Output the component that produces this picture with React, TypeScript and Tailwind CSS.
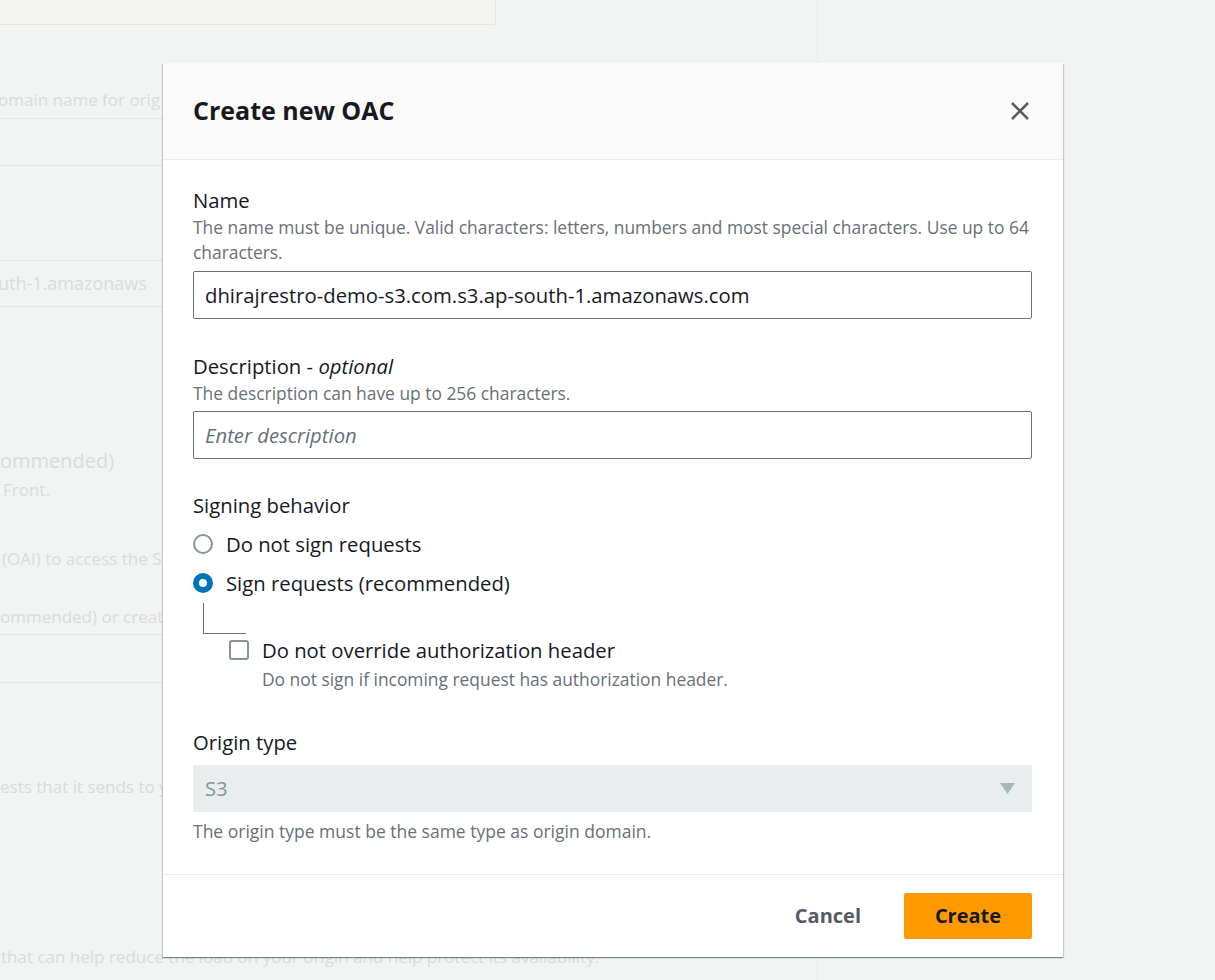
import React from "react";

// faint page behind the modal (only the part left of the modal shows)
function BackgroundPage() {
  return (
    <div className="flex h-full w-full">
      <div className="w-[818px] shrink-0 border-r border-[#e9ebeb] text-[#d9dcdc]">
        <div className="h-[25px] w-[496px] border-b border-r border-[#e6e6e1] bg-[#f4f4f2] rounded-br-[3px]" />
        <div className="w-[163px] overflow-hidden">
          <div className="mt-[63px] -ml-[2px] text-[17px] leading-[24px] whitespace-nowrap">omain name for orig</div>
          <div className="mt-[6px] h-[48px] border-y border-[#e4e7e7]" />
          <div className="mt-[94px] h-[47px] border-y border-[#e4e7e7] flex items-center -ml-[2px] text-[18px] whitespace-nowrap">
            uth-1.amazonaws
          </div>
          <div className="mt-[141px] text-[20px] leading-[26px] whitespace-nowrap">ommended)</div>
          <div className="mt-[4px] ml-[3px] text-[17px] leading-[24px] whitespace-nowrap">Front.</div>
          <div className="mt-[44px] ml-[2px] text-[17px] leading-[26px] whitespace-nowrap">(OAI) to access the S</div>
          <div className="mt-[33px] text-[17px] leading-[24px] whitespace-nowrap">ommended) or creat</div>
          <div className="mt-[5px] h-[49px] border-y border-[#efe3e1]" />
          <div className="mt-[92px] text-[17px] leading-[24px] whitespace-nowrap">ests that it sends to y</div>
        </div>
        <div className="mt-[146px] ml-[1px] text-[17px] leading-[24px] whitespace-nowrap">
          that can help reduce the load on your origin and help protect its availability.
        </div>
      </div>
      <div className="flex-1" />
    </div>
  );
}

function Field({ label, optional, desc, children }: { label: string; optional?: boolean; desc?: React.ReactNode; children?: React.ReactNode }) {
  return (
    <div>
      <div className="text-[20.3px] leading-[26px] text-[#16191f]">
        {label}
        {optional && (
          <>
            {" - "}
            <i>optional</i>
          </>
        )}
      </div>
      {desc && <div className="mt-[2px] text-[17.4px] leading-[25px] text-[#687078]">{desc}</div>}
      {children}
    </div>
  );
}

export default function App() {
  return (
    <div className="relative w-[1215px] h-[980px] overflow-hidden bg-[#f2f3f3] font-['Open_Sans',sans-serif]">
      <BackgroundPage />

      {/* modal */}
      <div className="absolute left-[163px] top-[63px] w-[900px] h-[894px] bg-white flex flex-col shadow-[0_1px_1px_0_rgba(0,28,36,0.3),1px_1px_1px_0_rgba(0,28,36,0.15),-1px_1px_1px_0_rgba(0,28,36,0.15)]">
        <div className="h-[97px] shrink-0 bg-[#fafafa] border-b border-[#eaeded] flex items-center justify-between pl-[30px] pr-[33px]">
          <h2 className="text-[25px] font-bold text-[#16191f] leading-[32px] -mt-[3px]">Create new OAC</h2>
          <button className="w-[20px] h-[20px] text-[#545b64]">
            <svg viewBox="0 0 20 20" width="20" height="20" fill="none" stroke="currentColor" strokeWidth="2.5">
              <path d="M2 2 L18 18 M18 2 L2 18" />
            </svg>
          </button>
        </div>

        <div className="flex-1 pl-[30px] pr-[31px] pt-[27px]">
          <Field
            label="Name"
            desc="The name must be unique. Valid characters: letters, numbers and most special characters. Use up to 64 characters."
          >
            <div className="mt-[6px] h-[48px] border border-[#687078] rounded-[2px] px-[11px] flex items-center text-[20.3px] text-[#16191f]">
              dhirajrestro-demo-s3.com.s3.ap-south-1.amazonaws.com
            </div>
          </Field>

          <div className="mt-[34px]">
            <Field label="Description" optional desc="The description can have up to 256 characters.">
              <div className="mt-[5px] h-[48px] border border-[#687078] rounded-[2px] px-[11px] flex items-center text-[20.3px] italic text-[#687078]">
                Enter description
              </div>
            </Field>
          </div>

          <div className="mt-[33px]">
            <Field label="Signing behavior" />
            <div className="mt-[13px] flex items-center h-[26px]">
              <span className="w-[20px] h-[20px] rounded-full border-2 border-[#879596] bg-white" />
              <span className="ml-[13px] text-[20.3px] text-[#16191f]">Do not sign requests</span>
            </div>
            <div className="mt-[13px] flex items-center h-[26px]">
              <span className="w-[20px] h-[20px] rounded-full bg-[#0073bb] flex items-center justify-center">
                <span className="w-[8px] h-[8px] rounded-full bg-white" />
              </span>
              <span className="ml-[13px] text-[20.3px] text-[#16191f]">Sign requests (recommended)</span>
            </div>
            <div className="ml-[10px] mt-[7px] w-[43px] h-[31px] border-l border-b border-[#687078]" />
            <div className="ml-[36px] mt-[3px]">
              <div className="flex items-center h-[26px]">
                <span className="w-[20px] h-[20px] rounded-[3px] border-2 border-[#879596] bg-white" />
                <span className="ml-[13px] text-[20.3px] text-[#16191f]">Do not override authorization header</span>
              </div>
              <div className="ml-[33px] mt-[4px] text-[17.4px] leading-[25px] text-[#687078]">
                Do not sign if incoming request has authorization header.
              </div>
            </div>
          </div>

          <div className="mt-[37px]">
            <Field label="Origin type" />
            <div className="mt-[10px] h-[47px] bg-[#eaeded] rounded-[2px] pl-[12px] pr-[17px] flex items-center justify-between">
              <span className="text-[20.3px] text-[#879596]">S3</span>
              <svg width="15" height="11" viewBox="0 0 15 11">
                <path d="M0 0 H15 L7.5 11 Z" fill="#aab7b8" />
              </svg>
            </div>
            <div className="mt-[7px] text-[17.5px] leading-[25px] text-[#687078]">
              The origin type must be the same type as origin domain.
            </div>
          </div>
        </div>

        <div className="h-[83px] shrink-0 border-t border-[#eaeded] flex items-center justify-end gap-[23px] pr-[31px]">
          <button className="px-[20px] h-[46px] text-[20px] font-bold text-[#545b64]">Cancel</button>
          <button className="w-[128px] h-[46px] rounded-[2px] bg-[#ff9900] text-[20px] font-bold text-[#16191f]">Create</button>
        </div>
      </div>
    </div>
  );
}
